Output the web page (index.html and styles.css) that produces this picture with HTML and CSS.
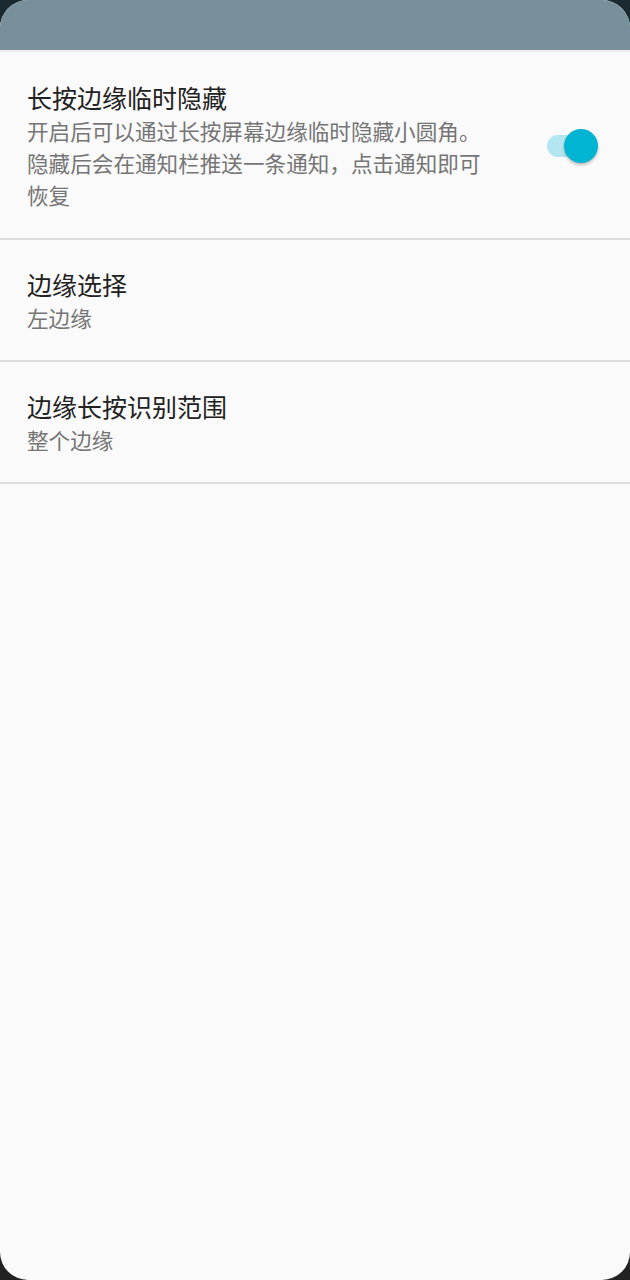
FILE: index.html
```html
<!DOCTYPE html>
<html lang="zh">
<head>
<meta charset="utf-8">
<link rel="stylesheet" href="styles.css">
</head>
<body>
<div class="screen">
  <div class="appbar"></div>
  <div class="list">
    <div class="item item-switch">
      <div class="text">
        <div class="title">长按边缘临时隐藏</div>
        <div class="summary">开启后可以通过长按屏幕边缘临时隐藏小圆角。隐藏后会在通知栏推送一条通知，点击通知即可恢复</div>
      </div>
      <div class="widget">
        <div class="switch"><div class="track"></div><div class="thumb"></div></div>
      </div>
    </div>
    <div class="item">
      <div class="text">
        <div class="title">边缘选择</div>
        <div class="summary">左边缘</div>
      </div>
    </div>
    <div class="item">
      <div class="text">
        <div class="title">边缘长按识别范围</div>
        <div class="summary">整个边缘</div>
      </div>
    </div>
  </div>
</div>
</body>
</html>
```

FILE: styles.css
```css
html, body {
  margin: 0;
  padding: 0;
}
body {
  width: 630px;
  height: 1280px;
  background: linear-gradient(#1b2a2f 0, #1b2a2f 50%, #222 50%, #222 100%);
  font-family: "Noto Sans CJK SC", "Noto Sans", sans-serif;
  overflow: hidden;
}
.screen {
  width: 630px;
  height: 1280px;
  border-radius: 28px;
  overflow: hidden;
  background: #fafafa;
  display: flex;
  flex-direction: column;
}
.appbar {
  height: 50px;
  background: #78909c;
  flex: none;
}
.list {
  border-top: 2px solid #eeeeee;
}
.item {
  display: flex;
  align-items: center;
  padding: 28px 27px 26px 27px;
  border-bottom: 2px solid #dddddd;
}
.item-switch {
  padding-top: 29px;
  padding-bottom: 27px;
}
.text {
  flex: 1;
  min-width: 0;
}
.title {
  font-size: 25px;
  line-height: 32px;
  color: #212121;
}
.summary {
  margin-top: 2px;
  font-size: 21.6px;
  line-height: 32px;
  color: #757575;
}
.widget {
  width: 111px;
  flex: none;
  display: flex;
  justify-content: flex-end;
}
.switch {
  position: relative;
  width: 56px;
  height: 36px;
  margin-right: 2px;
}
.track {
  position: absolute;
  left: 2px;
  top: 7px;
  width: 46px;
  height: 22px;
  border-radius: 11px;
  background: #b3e6f0;
}
.thumb {
  position: absolute;
  right: 3px;
  top: 1px;
  width: 34px;
  height: 34px;
  border-radius: 50%;
  background: #00b4d2;
  box-shadow: 0 2px 3px rgba(0, 0, 0, 0.25);
}
```
